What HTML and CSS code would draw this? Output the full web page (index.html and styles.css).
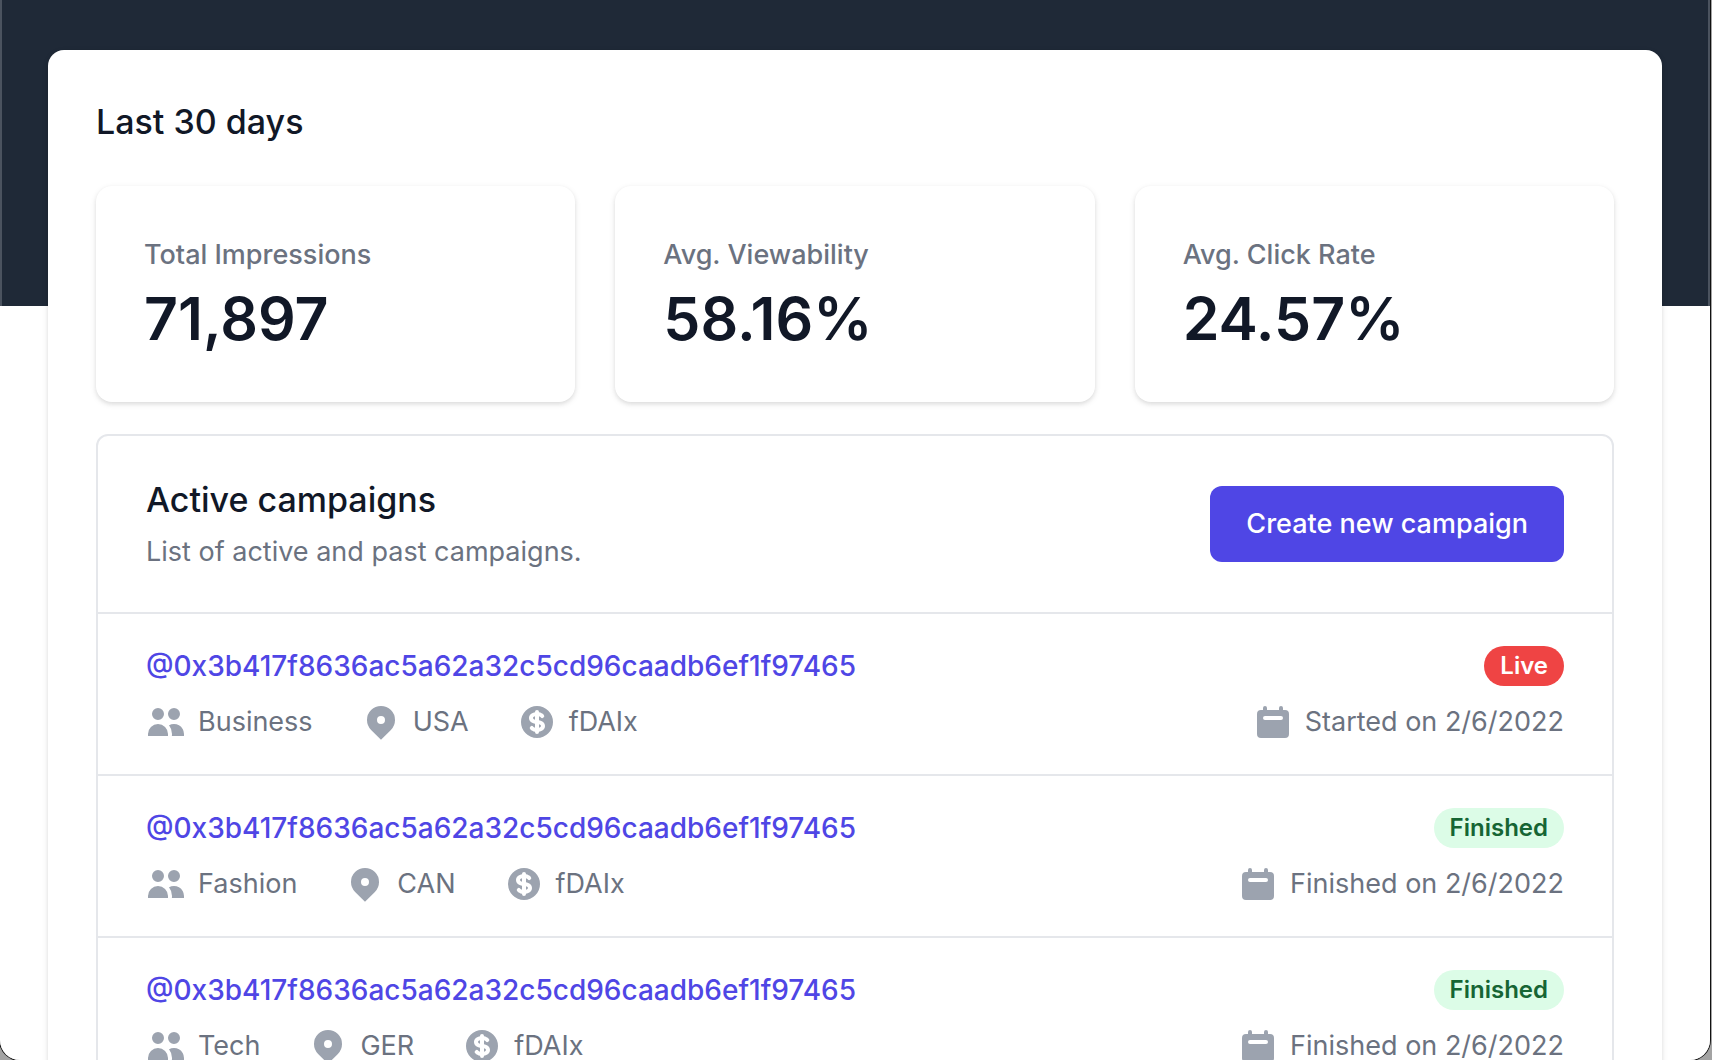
FILE: index.html
```html
<!DOCTYPE html>
<html lang="en">
<head>
<meta charset="utf-8">
<meta name="viewport" content="width=device-width, initial-scale=1">
<title>Campaigns</title>
<link rel="stylesheet" href="styles.css">
</head>
<body>
<svg class="sprite" aria-hidden="true">
  <symbol id="icon-users" viewBox="0 0 20 20"><path d="M9 6a3 3 0 11-6 0 3 3 0 016 0zM17 6a3 3 0 11-6 0 3 3 0 016 0zM12.93 17c.046-.327.07-.66.07-1a6.97 6.97 0 00-1.5-4.33A5 5 0 0119 16v1h-6.07zM6 11a5 5 0 015 5v1H1v-1a5 5 0 015-5z"/></symbol>
  <symbol id="icon-pin" viewBox="0 0 20 20"><path fill-rule="evenodd" clip-rule="evenodd" d="M5.05 4.05a7 7 0 119.9 9.9L10 18.9l-4.95-4.95a7 7 0 010-9.9zM10 11a2 2 0 100-4 2 2 0 000 4z"/></symbol>
  <symbol id="icon-dollar" viewBox="0 0 20 20"><path d="M8.433 7.418c.155-.103.346-.196.567-.267v1.698a2.305 2.305 0 01-.567-.267C8.07 8.34 8 8.114 8 8c0-.114.07-.34.433-.582zM11 12.849v-1.698c.22.071.412.164.567.267.364.243.433.468.433.582 0 .114-.07.34-.433.582a2.305 2.305 0 01-.567.267z"/><path fill-rule="evenodd" clip-rule="evenodd" d="M10 18a8 8 0 100-16 8 8 0 000 16zm1-13a1 1 0 10-2 0v.092a4.535 4.535 0 00-1.676.662C6.602 6.234 6 7.009 6 8c0 .99.602 1.765 1.324 2.246.48.32 1.054.545 1.676.662v1.941c-.391-.127-.68-.317-.843-.504a1 1 0 10-1.51 1.31c.562.649 1.413 1.076 2.353 1.253V15a1 1 0 102 0v-.092a4.535 4.535 0 001.676-.662C13.398 13.766 14 12.991 14 12c0-.99-.602-1.765-1.324-2.246A4.535 4.535 0 0011 9.092V7.151c.391.127.68.317.843.504a1 1 0 101.511-1.31c-.563-.649-1.413-1.076-2.354-1.253V5z"/></symbol>
  <symbol id="icon-calendar" viewBox="0 0 20 20"><path fill-rule="evenodd" clip-rule="evenodd" d="M6 2a1 1 0 00-1 1v1H4a2 2 0 00-2 2v10a2 2 0 002 2h12a2 2 0 002-2V6a2 2 0 00-2-2h-1V3a1 1 0 10-2 0v1H7V3a1 1 0 00-1-1zm0 5a1 1 0 000 2h8a1 1 0 100-2H6z"/></symbol>
</svg>
<div class="window">
  <main class="panel">
    <h2 class="heading">Last 30 days</h2>
    <dl class="stats">
      <div class="stat"><dt class="stat-label">Total Impressions</dt><dd class="stat-value">71,897</dd></div>
      <div class="stat"><dt class="stat-label">Avg. Viewability</dt><dd class="stat-value">58.16%</dd></div>
      <div class="stat"><dt class="stat-label">Avg. Click Rate</dt><dd class="stat-value">24.57%</dd></div>
    </dl>
    <section class="campaigns">
      <header class="campaigns-header">
        <div>
          <h3 class="heading">Active campaigns</h3>
          <p class="subtitle">List of active and past campaigns.</p>
        </div>
        <button type="button" class="button">Create new campaign</button>
      </header>
      <ul class="list">
        <li class="row">
          <div class="line">
            <a class="address" href="#">@0x3b417f8636ac5a62a32c5cd96caadb6ef1f97465</a>
            <span class="badge badge-live">Live</span>
          </div>
          <div class="line">
            <div class="tags">
              <span class="meta"><svg class="icon" aria-hidden="true"><use href="#icon-users"/></svg>Business</span>
              <span class="meta"><svg class="icon" aria-hidden="true"><use href="#icon-pin"/></svg>USA</span>
              <span class="meta"><svg class="icon" aria-hidden="true"><use href="#icon-dollar"/></svg>fDAIx</span>
            </div>
            <span class="meta"><svg class="icon" aria-hidden="true"><use href="#icon-calendar"/></svg>Started on 2/6/2022</span>
          </div>
        </li>
        <li class="row">
          <div class="line">
            <a class="address" href="#">@0x3b417f8636ac5a62a32c5cd96caadb6ef1f97465</a>
            <span class="badge badge-finished">Finished</span>
          </div>
          <div class="line">
            <div class="tags">
              <span class="meta"><svg class="icon" aria-hidden="true"><use href="#icon-users"/></svg>Fashion</span>
              <span class="meta"><svg class="icon" aria-hidden="true"><use href="#icon-pin"/></svg>CAN</span>
              <span class="meta"><svg class="icon" aria-hidden="true"><use href="#icon-dollar"/></svg>fDAIx</span>
            </div>
            <span class="meta"><svg class="icon" aria-hidden="true"><use href="#icon-calendar"/></svg>Finished on 2/6/2022</span>
          </div>
        </li>
        <li class="row">
          <div class="line">
            <a class="address" href="#">@0x3b417f8636ac5a62a32c5cd96caadb6ef1f97465</a>
            <span class="badge badge-finished">Finished</span>
          </div>
          <div class="line">
            <div class="tags">
              <span class="meta"><svg class="icon" aria-hidden="true"><use href="#icon-users"/></svg>Tech</span>
              <span class="meta"><svg class="icon" aria-hidden="true"><use href="#icon-pin"/></svg>GER</span>
              <span class="meta"><svg class="icon" aria-hidden="true"><use href="#icon-dollar"/></svg>fDAIx</span>
            </div>
            <span class="meta"><svg class="icon" aria-hidden="true"><use href="#icon-calendar"/></svg>Finished on 2/6/2022</span>
          </div>
        </li>
      </ul>
    </section>
  </main>
</div>
</body>
</html>
```
FILE: styles.css
```css
*, *::before, *::after { box-sizing: border-box; }

body {
  margin: 0;
  background: #a3a3a3;
  color: #111827;
  font-family: Inter, "Liberation Sans", sans-serif;
  font-size: 27px;
  line-height: 40px;
}

h2, h3, p, dl, dd, ul { margin: 0; padding: 0; }

.sprite { display: none; }

/* App window: dark band behind the top of a white page */
.window {
  height: 100vh;
  margin-right: 2px;
  overflow: hidden;
  padding: 50px 48px 0;
  background: linear-gradient(#1f2937 306px, #fff 306px);
  border-radius: 0 0 20px 20px;
  box-shadow:
    0 0 0 1px #111,
    inset 2px 0 0 rgba(255, 255, 255, 0.2),
    inset -2px 0 0 rgba(255, 255, 255, 0.2);
}

.panel {
  padding: 48px;
  background: #fff;
  border-radius: 16px;
  box-shadow: 0 2px 6px rgba(0, 0, 0, 0.1), 0 2px 4px rgba(0, 0, 0, 0.06);
}

.heading {
  font-size: 34px;
  font-weight: 500;
  line-height: 48px;
}

.stats {
  display: grid;
  grid-template-columns: repeat(3, 1fr);
  gap: 40px;
  margin-top: 40px;
}

.stat {
  padding: 49px 48px 47px;
  background: #fff;
  border-radius: 16px;
  box-shadow: 0 2px 6px rgba(0, 0, 0, 0.1), 0 2px 4px rgba(0, 0, 0, 0.06);
}

.stat-label { color: #6b7280; font-weight: 500; }

.stat-value {
  margin-top: 8px;
  font-size: 59px;
  font-weight: 600;
  line-height: 72px;
}

.campaigns {
  margin-top: 32px;
  border: 2px solid #e5e7eb;
  border-radius: 12px;
}

.campaigns-header {
  display: flex;
  align-items: center;
  justify-content: space-between;
  padding: 40px 48px;
}

.subtitle { margin-top: 8px; color: #6b7280; }

.button {
  padding: 18px 36px;
  border: 0;
  border-radius: 12px;
  background: #4f46e5;
  color: #fff;
  font: inherit;
  font-weight: 500;
}

.list { list-style: none; }

.row {
  display: flex;
  flex-direction: column;
  gap: 16px;
  padding: 32px 48px;
  border-top: 2px solid #e5e7eb;
}

.line {
  display: flex;
  align-items: center;
  justify-content: space-between;
}

.address {
  color: #4f46e5;
  font-size: 28px;
  font-weight: 500;
  text-decoration: none;
}

.badge {
  padding: 0 16px;
  border-radius: 20px;
  font-size: 24px;
  font-weight: 600;
}

.badge-live { background: #ef4444; color: #fff; }
.badge-finished { background: #dcfce7; color: #166534; }

.tags { display: flex; gap: 48px; }

.meta {
  display: flex;
  align-items: center;
  gap: 12px;
  color: #6b7280;
}

.icon { width: 40px; height: 40px; fill: #9ca3af; }
```
